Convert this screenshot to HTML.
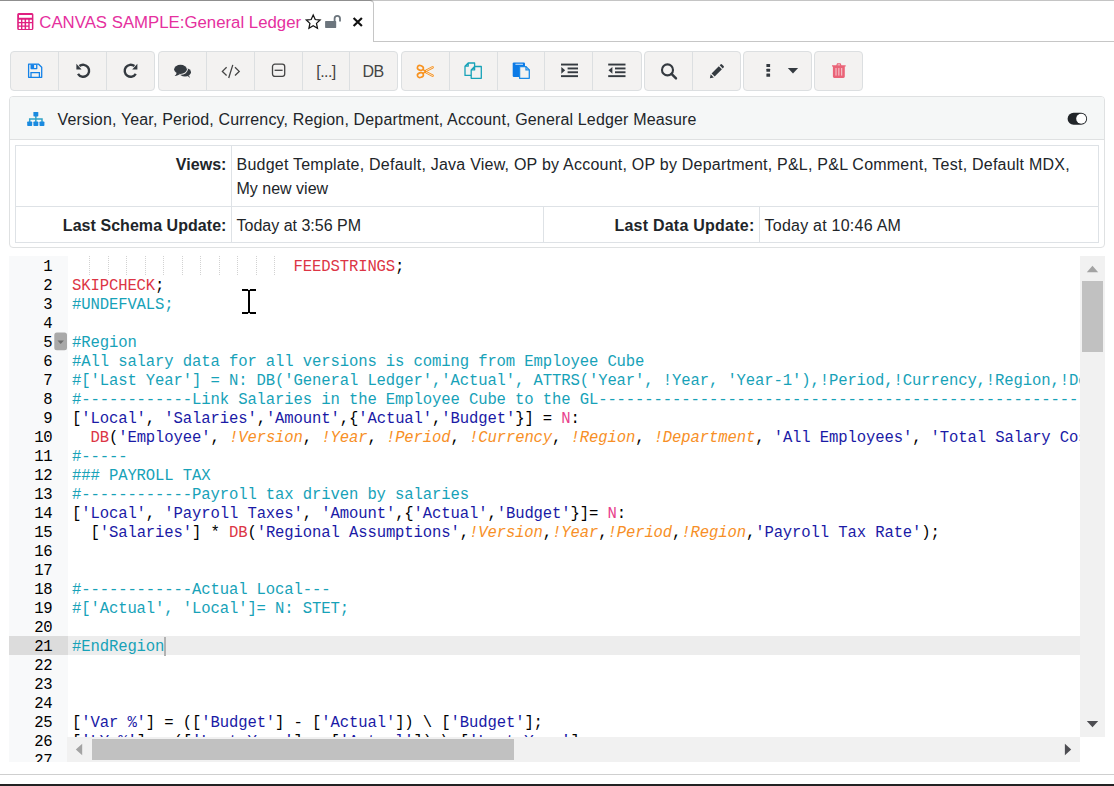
<!DOCTYPE html>
<html lang="en"><head><meta charset="utf-8"><title>CANVAS SAMPLE:General Ledger</title>
<style>
*{box-sizing:border-box}
html,body{margin:0;padding:0;width:1114px;height:786px;overflow:hidden;background:#fff}
body{font-family:"Liberation Sans",sans-serif;font-size:16px;color:#212529;position:relative}
.abs{position:absolute}
svg{display:block;overflow:visible}
#topline{left:0;top:0;width:1114px;height:1px;background:#c4c4c4}
#topline2{display:none}
#tab{left:0;top:0;width:374px;height:42px;border-right:1px solid #c6c6c6;border-top:1px solid #8f8f8f;border-top-right-radius:4px;background:#fff}
#tabrest{left:373px;top:41px;width:741px;height:1px;background:#c6c6c6}
#tabtitle{left:39.3px;top:12px;font-size:16.8px;line-height:22px;color:#e5309e;white-space:nowrap}
.grp{position:absolute;top:51px;height:40px;background:#f3f2f1;border:1px solid #dcdfe1;border-radius:4px;display:flex}
.grp .b{height:100%;border-right:1px solid #dcdfe1;position:relative;flex:none}
.grp .b:last-child{border-right:none}
.grp .t{font-size:16px;color:#444;text-align:center;line-height:38px;padding-top:1px}
#panel{left:9px;top:96px;width:1096px;height:152px;border:1px solid #dfe1e2;border-radius:4px;background:#fff}
#phead{left:0;top:0;width:1094px;height:43px;background:#f5f7f7;border-bottom:1px solid #dfe1e2;border-radius:3px 3px 0 0}
#ptitle{left:47.5px;top:12px;font-size:16px;line-height:22px;white-space:nowrap;color:#212529;letter-spacing:0.157px}
.cell{position:absolute;border:1px solid #dee2e6;font-size:16px;line-height:24px;color:#212529;white-space:nowrap}
.lbl{font-weight:bold;text-align:right;padding-right:4.5px;letter-spacing:0.05px}
.val{padding-left:4.5px}
.vw{letter-spacing:0.23px}
.ld{letter-spacing:0.24px}
#editor{left:9px;top:256px;width:1096px;height:506px;overflow:hidden;background:#fff}
#gutter{left:0;top:0;width:59px;height:506px;background:#f8f9fa}
.ln{position:absolute;left:0;width:43.6px;text-align:right;font-family:"Liberation Mono",monospace;font-size:15.6px;letter-spacing:-0.127px;line-height:19px;height:19px;color:#000;padding-top:2px}
#code{left:59px;top:0;width:1012px;height:481px;overflow:hidden}
.l{position:absolute;left:4px;height:19px;line-height:19px;font-family:"Liberation Mono",monospace;font-size:15.6px;letter-spacing:-0.127px;white-space:pre;color:#000;padding-top:2px}
.k{color:#dc3545}.c{color:#17a2b8}.s{color:#1a1aa6}.v{color:#f78f26;font-style:italic}.n{color:#e83e8c}
.g{position:absolute;top:0;width:1px;height:19px;background:repeating-linear-gradient(to bottom,#d2d2d2 0,#d2d2d2 1px,transparent 1px,transparent 2px)}
#active{left:0;top:380px;width:1071px;height:19px;background:#ededed}
#gactive{left:0;top:380px;width:59px;height:19px;background:#dcdcdc}
#caret{left:96px;top:381px;width:2px;height:19px;background:#b2b2b2}
#vsb{left:1071px;top:0;width:25px;height:481px;background:#f1f1f1}
#vthumb{left:2px;top:25px;width:21px;height:71px;background:#c1c1c1}
#hsb{left:58px;top:481px;width:1013px;height:25px;background:#f1f1f1}
#hthumb{left:25px;top:2px;width:422px;height:21px;background:#c1c1c1}
#botline{left:0;top:774px;width:1114px;height:1px;background:#cfcfcf}
#botdark{left:0;top:784px;width:1114px;height:2px;background:#222}

</style></head><body>
<div id="topline" class="abs"></div><div id="topline2" class="abs"></div>
<div id="tab" class="abs"></div>
<div id="tabtitle" class="abs">CANVAS SAMPLE:General Ledger</div>
<svg class="abs" style="left:17px;top:13px" width="17" height="17" viewBox="0 0 17 17" ><path fill-rule="evenodd" fill="#e01f80" d="M1.7 0h13.2a1.5 1.5 0 0 1 1.5 1.5v14a1.5 1.5 0 0 1-1.5 1.5H1.7a1.5 1.5 0 0 1-1.5-1.5v-14A1.5 1.5 0 0 1 1.7 0z M2 2v2.8h12.9V2z M1.8 6.8h2.2v2.2h-2.2zM1.8 10.2h2.2v2.2h-2.2zM1.8 13.8h2.2v2.2h-2.2zM5.4 6.8h2.2v2.2h-2.2zM5.4 10.2h2.2v2.2h-2.2zM5.4 13.8h2.2v2.2h-2.2zM9.1 6.8h2.2v2.2h-2.2zM9.1 10.2h2.2v2.2h-2.2zM9.1 13.8h2.2v2.2h-2.2zM12.7 6.8h2.2v2.2h-2.2z M12.7 10.2h2.2v5.8h-2.2z"/></svg><svg class="abs" style="left:304px;top:12px" width="19" height="19" viewBox="0 0 19 19" ><polygon points="9.20,3.05 11.23,7.51 16.10,8.06 12.48,11.37 13.46,16.17 9.20,13.75 4.94,16.17 5.92,11.37 2.30,8.06 7.17,7.51" fill="none" stroke="#111" stroke-width="1.25" stroke-linejoin="miter"/></svg><svg class="abs" style="left:324px;top:13px" width="18" height="16" viewBox="0 0 18 16" ><rect x="1.1" y="8.1" width="11.1" height="6.8" rx="0.6" fill="#6c757d"/><path d="M10.6 9 V5.6 A2.7 2.7 0 0 1 16 5.6 V8.4" fill="none" stroke="#6c757d" stroke-width="1.8"/></svg><svg class="abs" style="left:351px;top:15px" width="14" height="14" viewBox="0 0 14 14" ><path d="M2.6 3 L10.9 11 M10.9 3 L2.6 11" stroke="#111" stroke-width="2.2" fill="none"/></svg>
<div id="tabrest" class="abs"></div>

<div class="grp" style="left:10px;width:145px"><div class="b " style="width:48px"></div><div class="b " style="width:48px"></div><div class="b " style="width:47px"></div></div>
<div class="grp" style="left:158px;width:240px"><div class="b " style="width:48px"></div><div class="b " style="width:48px"></div><div class="b " style="width:48px"></div><div class="b t" style="width:47px"><span style="letter-spacing:-0.55px">[...]</span></div><div class="b t" style="width:46px"><span style="letter-spacing:-0.7px">DB</span></div></div>
<div class="grp" style="left:401px;width:241px"><div class="b " style="width:48px"></div><div class="b " style="width:48px"></div><div class="b " style="width:47px"></div><div class="b " style="width:48px"></div><div class="b " style="width:48px"></div></div>
<div class="grp" style="left:644px;width:97px"><div class="b " style="width:48px"></div><div class="b " style="width:47px"></div></div>
<div class="grp" style="left:743px;width:69px"><div class="b " style="width:67px"></div></div>
<div class="grp" style="left:814px;width:49px"><div class="b " style="width:47px"></div></div>

<svg class="abs" style="left:27px;top:62px" width="17" height="17" viewBox="0 0 17 17" ><path d="M1.6 2.2 H11.6 L14.7 5.2 V15.3 H1.6 Z" fill="none" stroke="#1482e8" stroke-width="1.3" stroke-linejoin="round"/><path d="M3.5 2.2 H10.4 V6.6 A0.7 0.7 0 0 1 9.7 7.3 H4.2 A0.7 0.7 0 0 1 3.5 6.6 Z M7.1 3.1 V6 H9.1 V3.1 Z" fill="#1482e8" fill-rule="evenodd"/><path d="M4 15.3 V10.6 H12.4 V15.3" fill="none" stroke="#1482e8" stroke-width="1.3"/></svg><svg class="abs" style="left:74px;top:62px" width="18" height="18" viewBox="0 0 18 18" ><path d="M5.41 4.07 A6.0 6.0 0 1 1 4.01 11.98" fill="none" stroke="#343a40" stroke-width="2.4"/><path d="M2.40 1.70 V7.50 H7.60 Z" fill="#343a40"/></svg><svg class="abs" style="left:122px;top:62px" width="18" height="18" viewBox="0 0 18 18" ><g transform="translate(17.4,0) scale(-1,1)"><path d="M5.01 4.07 A6.0 6.0 0 1 1 3.61 11.98" fill="none" stroke="#343a40" stroke-width="2.4"/><path d="M2.00 1.70 V7.50 H7.20 Z" fill="#343a40"/></g></svg><svg class="abs" style="left:172px;top:63px" width="21" height="17" viewBox="0 0 21 17" ><ellipse cx="13" cy="9.3" rx="6" ry="4.2" fill="#343a40"/><path d="M15.2 12.6 L18 15 L17 12.4 Z" fill="#343a40"/><ellipse cx="8.5" cy="6.35" rx="7.4" ry="5.5" fill="#f3f2f1"/><ellipse cx="8.5" cy="6.35" rx="6.4" ry="4.55" fill="#343a40"/><path d="M4.6 9.6 C4.4 11.4 3.6 12.4 2.6 13 C5 12.8 7 12 8.4 10.8 Z" fill="#343a40"/></svg><svg class="abs" style="left:220px;top:63px" width="22" height="17" viewBox="0 0 22 17" ><path d="M6.6 4.3 L2.4 8.4 L6.6 12.5 M15 4.3 L19.2 8.4 L15 12.5 M12.8 1.9 L8.7 15" fill="none" stroke="#444" stroke-width="1.3"/></svg><svg class="abs" style="left:270px;top:62px" width="17" height="17" viewBox="0 0 17 17" ><rect x="2.5" y="2.2" width="12.2" height="12.2" rx="2.4" fill="none" stroke="#444" stroke-width="1.3"/><path d="M4.6 8.3 H12.6" stroke="#444" stroke-width="1.3"/></svg><svg class="abs" style="left:415px;top:63px" width="21" height="17" viewBox="0 0 21 17" ><g fill="none" stroke="#f8921e" stroke-linecap="round"><path d="M8.2 6.6 L12.5 10 M8.2 10.4 L12.5 7" stroke-width="1.5"/><path d="M10.6 8 L17.6 4.3" stroke-width="2.5"/><path d="M10.6 9 L17.6 12.7" stroke-width="2.5"/><path d="M11.4 7.6 L17.6 4.3" stroke="#f3f2f1" stroke-width="0.8"/><path d="M11.4 9.4 L17.6 12.7" stroke="#f3f2f1" stroke-width="0.8"/><ellipse cx="5.4" cy="4.9" rx="3.05" ry="2.35" transform="rotate(18 5.4 4.9)" stroke-width="1.6"/><ellipse cx="5.4" cy="12.1" rx="3.05" ry="2.35" transform="rotate(-18 5.4 12.1)" stroke-width="1.6"/></g></svg><svg class="abs" style="left:463px;top:61px" width="21" height="19" viewBox="0 0 21 19" ><g fill="none" stroke="#17a2b8" stroke-width="1.3" stroke-linejoin="round"><path d="M5.2 2 H11.6 V5.5 M8.2 14.4 H2 V5.2 L5.2 2 V5.2 H2"/><path d="M11.6 5.5 H18.3 V17.3 H8.2 V8.9 L11.6 5.5 V8.9 H8.2"/></g></svg><svg class="abs" style="left:511px;top:61px" width="21" height="19" viewBox="0 0 21 19" ><rect x="1.7" y="1.4" width="12.3" height="14.6" rx="1.2" fill="#0b7ae6"/><rect x="4.4" y="2.7" width="7.6" height="1.1" rx="0.3" fill="#d4e8fb"/><path d="M8.6 5.6 H15 L18.3 8.9 V17.3 H8.6 Z" fill="#f3f2f1" stroke="#1a8ae8" stroke-width="1.3" stroke-linejoin="round"/><path d="M15 5.6 V8.9 H18.3" fill="none" stroke="#1a8ae8" stroke-width="1.3"/></svg><svg class="abs" style="left:560px;top:62px" width="20" height="17" viewBox="0 0 20 17" ><g fill="#343a40"><rect x="1" y="1.6" width="17" height="1.9"/><rect x="7.6" y="5.5" width="10.4" height="1.9"/><rect x="7.6" y="9.3" width="10.4" height="1.9"/><rect x="1" y="13.2" width="17" height="1.9"/><path d="M1.3 5 L5.2 8.3 L1.3 11.7 Z"/></g></svg><svg class="abs" style="left:607px;top:62px" width="20" height="17" viewBox="0 0 20 17" ><g fill="#343a40"><rect x="1.2" y="1.6" width="17.3" height="1.9"/><rect x="8" y="5.5" width="10.5" height="1.9"/><rect x="8" y="9.3" width="10.5" height="1.9"/><rect x="1.2" y="13.2" width="17.3" height="1.9"/><path d="M5.4 5 L1.5 8.3 L5.4 11.7 Z"/></g></svg><svg class="abs" style="left:659px;top:62px" width="20" height="19" viewBox="0 0 20 19" ><circle cx="8.5" cy="7.9" r="5.5" fill="none" stroke="#343a40" stroke-width="2.1"/><path d="M12.5 11.9 L17 16.4" stroke="#343a40" stroke-width="2.4" stroke-linecap="round"/></svg><svg class="abs" style="left:707.6px;top:62.8px" width="19" height="18" viewBox="0 0 19 18" ><path transform="scale(0.94)" d="M2 16.2 L2.9 12 L6.2 15.3 Z M3.8 11.1 L11.5 3.4 L14.8 6.7 L7.1 14.4 Z M12.4 2.5 L13.3 1.6 A1.1 1.1 0 0 1 14.9 1.6 L16.6 3.3 A1.1 1.1 0 0 1 16.6 4.9 L15.7 5.8 Z" fill="#343a40"/></svg><svg class="abs" style="left:765px;top:62px" width="36" height="17" viewBox="0 0 36 17" ><g fill="#343a40"><rect x="1.4" y="1.9" width="3.7" height="3.1" rx="0.5"/><rect x="1.4" y="6.7" width="3.7" height="3.1" rx="0.5"/><rect x="1.4" y="11.6" width="3.7" height="3.1" rx="0.5"/><path d="M22.8 6 H33.1 L28 11.4 Z"/></g></svg><svg class="abs" style="left:831px;top:62px" width="16" height="17" viewBox="0 0 16 17" ><path d="M1 3.2 H14.7 V4.6 H13.8 V14.6 A1.4 1.4 0 0 1 12.4 16 H3.3 A1.4 1.4 0 0 1 1.9 14.6 V4.6 H1 Z M5.3 3.2 L6.1 1.3 H9.6 L10.4 3.2 H9.2 L8.9 2.4 H6.8 L6.5 3.2 Z" fill="#ea6478"/><path d="M5 6 V13.6 M7.85 6 V13.6 M10.7 6 V13.6" stroke="#f8d9de" stroke-width="0.9"/></svg>
<div id="panel" class="abs">
  <div id="phead" class="abs"><div id="ptitle" class="abs">Version, Year, Period, Currency, Region, Department, Account, General Ledger Measure</div></div>
  <div class="cell lbl" style="left:5px;top:48px;width:217px;height:62px;padding-top:7px">Views:</div>
  <div class="cell val" style="left:221px;top:48px;width:868px;height:62px;padding-top:7px"><span class="vw">Budget Template, Default, Java View, OP by Account, OP by Department, P&amp;L, P&amp;L Comment, Test, Default MDX,</span><br>My new view</div>
  <div class="cell lbl" style="left:5px;top:109px;width:217px;height:37px;padding-top:7px">Last Schema Update:</div>
  <div class="cell val" style="left:221px;top:109px;width:313px;height:37px;padding-top:7px">Today at 3:56 PM</div>
  <div class="cell lbl" style="left:533px;top:109px;width:217px;height:37px;padding-top:7px"><span class="ld">Last Data Update:</span></div>
  <div class="cell val" style="left:749px;top:109px;width:340px;height:37px;padding-top:7px"><span style="letter-spacing:0.24px">Today at 10:46 AM</span></div>
</div>

<svg class="abs" style="left:27px;top:111px" width="18" height="16" viewBox="0 0 18 16" ><path d="M8.85 5 V8 M2.7 11 V8 H15 V11 M8.85 8 V11" fill="none" stroke="#2fa3c6" stroke-width="1.5"/><g fill="#1a8ae0"><rect x="6.4" y="0.9" width="4.9" height="4.6" rx="0.7"/><rect x="0.2" y="10.6" width="5" height="4.3" rx="0.7"/><rect x="6.4" y="10.6" width="4.9" height="4.3" rx="0.7"/><rect x="12.5" y="10.6" width="4.9" height="4.3" rx="0.7"/></g></svg><svg class="abs" style="left:1067px;top:112px" width="21" height="14" viewBox="0 0 21 14" ><rect x="0.6" y="0.8" width="19.5" height="12" rx="6" fill="#212529"/><circle cx="14.2" cy="6.8" r="5" fill="#fff"/></svg>
<div id="editor" class="abs">
  <div id="active" class="abs"></div>
  <div id="code" class="abs">
    <i class="g" style="left:21.47px"></i><i class="g" style="left:39.94px"></i><i class="g" style="left:58.41px"></i><i class="g" style="left:76.88px"></i><i class="g" style="left:95.35px"></i><i class="g" style="left:113.82px"></i><i class="g" style="left:132.29px"></i><i class="g" style="left:150.76px"></i><i class="g" style="left:169.23px"></i><i class="g" style="left:187.70px"></i><i class="g" style="left:206.17px"></i>
    <div class="l" style="top:0px">                        <span class="k">FEEDSTRINGS</span>;</div>
<div class="l" style="top:19px"><span class="k">SKIPCHECK</span>;</div>
<div class="l" style="top:38px"><span class="c">#UNDEFVALS;</span></div>
<div class="l" style="top:76px"><span class="c">#Region</span></div>
<div class="l" style="top:95px"><span class="c">#All salary data for all versions is coming from Employee Cube</span></div>
<div class="l" style="top:114px"><span class="c">#['Last Year'] = N: DB('General Ledger','Actual', ATTRS('Year', !Year, 'Year-1'),!Period,!Currency,!Region,!Department,!Account,!General Ledger Measure);</span></div>
<div class="l" style="top:133px"><span class="c">#------------Link Salaries in the Employee Cube to the GL----------------------------------------------------------------------</span></div>
<div class="l" style="top:152px">[<span class="s">'Local'</span>, <span class="s">'Salaries'</span>,<span class="s">'Amount'</span>,{<span class="s">'Actual'</span>,<span class="s">'Budget'</span>}] = <span class="n">N</span>:</div>
<div class="l" style="top:171px">  <span class="k">DB</span>(<span class="s">'Employee'</span>, <span class="v">!Version</span>, <span class="v">!Year</span>, <span class="v">!Period</span>, <span class="v">!Currency</span>, <span class="v">!Region</span>, <span class="v">!Department</span>, <span class="s">'All Employees'</span>, <span class="s">'Total Salary Cost'</span>);</div>
<div class="l" style="top:190px"><span class="c">#-----</span></div>
<div class="l" style="top:209px"><span class="c">### PAYROLL TAX</span></div>
<div class="l" style="top:228px"><span class="c">#------------Payroll tax driven by salaries</span></div>
<div class="l" style="top:247px">[<span class="s">'Local'</span>, <span class="s">'Payroll Taxes'</span>, <span class="s">'Amount'</span>,{<span class="s">'Actual'</span>,<span class="s">'Budget'</span>}]= <span class="n">N</span>:</div>
<div class="l" style="top:266px">  [<span class="s">'Salaries'</span>] * <span class="k">DB</span>(<span class="s">'Regional Assumptions'</span>,<span class="v">!Version</span>,<span class="v">!Year</span>,<span class="v">!Period</span>,<span class="v">!Region</span>,<span class="s">'Payroll Tax Rate'</span>);</div>
<div class="l" style="top:323px"><span class="c">#------------Actual Local---</span></div>
<div class="l" style="top:342px"><span class="c">#['Actual', 'Local']= N: STET;</span></div>
<div class="l" style="top:380px"><span class="c">#EndRegion</span></div>
<div class="l" style="top:456px">[<span class="s">'Var %'</span>] = ([<span class="s">'Budget'</span>] - [<span class="s">'Actual'</span>]) \ [<span class="s">'Budget'</span>];</div>
<div class="l" style="top:475px">[<span class="s">'LY %'</span>] = ([<span class="s">'Last Year'</span>] - [<span class="s">'Actual'</span>]) \ [<span class="s">'Last Year'</span>];</div>
    <div id="caret" class="abs"></div>
  </div>
  <div id="gutter" class="abs"></div>
  <div id="gactive" class="abs"></div>
  <div id="lns"><div class="ln" style="top:0px">1</div><div class="ln" style="top:19px">2</div><div class="ln" style="top:38px">3</div><div class="ln" style="top:57px">4</div><div class="ln" style="top:76px">5</div><div class="ln" style="top:95px">6</div><div class="ln" style="top:114px">7</div><div class="ln" style="top:133px">8</div><div class="ln" style="top:152px">9</div><div class="ln" style="top:171px">10</div><div class="ln" style="top:190px">11</div><div class="ln" style="top:209px">12</div><div class="ln" style="top:228px">13</div><div class="ln" style="top:247px">14</div><div class="ln" style="top:266px">15</div><div class="ln" style="top:285px">16</div><div class="ln" style="top:304px">17</div><div class="ln" style="top:323px">18</div><div class="ln" style="top:342px">19</div><div class="ln" style="top:361px">20</div><div class="ln" style="top:380px">21</div><div class="ln" style="top:399px">22</div><div class="ln" style="top:418px">23</div><div class="ln" style="top:437px">24</div><div class="ln" style="top:456px">25</div><div class="ln" style="top:475px">26</div><div class="ln" style="top:494px">27</div></div>
  
  <div id="vsb" class="abs"><div id="vthumb" class="abs"></div><svg class="abs" style="left:6px;top:9px" width="13" height="8" viewBox="0 0 13 8"><path d="M0.8 7.2 L6.5 0.8 L12.2 7.2 Z" fill="#a3a3a3"/></svg><svg class="abs" style="left:6px;top:464px" width="13" height="8" viewBox="0 0 13 8"><path d="M0.8 0.9 L12.2 0.9 L6.5 7.2 Z" fill="#4d4d52"/></svg></div>
  <div id="hsb" class="abs"><div id="hthumb" class="abs"></div><svg class="abs" style="left:8px;top:6px" width="8" height="13" viewBox="0 0 8 13"><path d="M7.2 0.8 L7.2 12.2 L0.8 6.5 Z" fill="#a3a3a3"/></svg><svg class="abs" style="left:997px;top:6px" width="8" height="13" viewBox="0 0 8 13"><path d="M0.9 0.8 L7.2 6.5 L0.9 12.2 Z" fill="#4d4d52"/></svg></div>
</div>
<svg class="abs" style="left:54px;top:332px" width="14" height="19" viewBox="0 0 14 19" ><rect x="0.3" y="0.4" width="12.7" height="17.8" rx="2.5" fill="#a9a9a9"/><path d="M3.5 8.6 H9.9 L6.7 12 Z" fill="#6e6e6e"/></svg><svg class="abs" style="left:240px;top:287px" width="18" height="29" viewBox="0 0 18 29" ><g fill="#000"><rect x="2" y="2" width="6.1" height="2"/><rect x="9.9" y="2" width="6.1" height="2"/><rect x="8" y="3" width="2" height="23"/><rect x="2" y="25" width="6.1" height="2"/><rect x="9.9" y="25" width="6.1" height="2"/></g></svg>
<div id="botline" class="abs"></div>
<div id="botdark" class="abs"></div>
</body></html>
